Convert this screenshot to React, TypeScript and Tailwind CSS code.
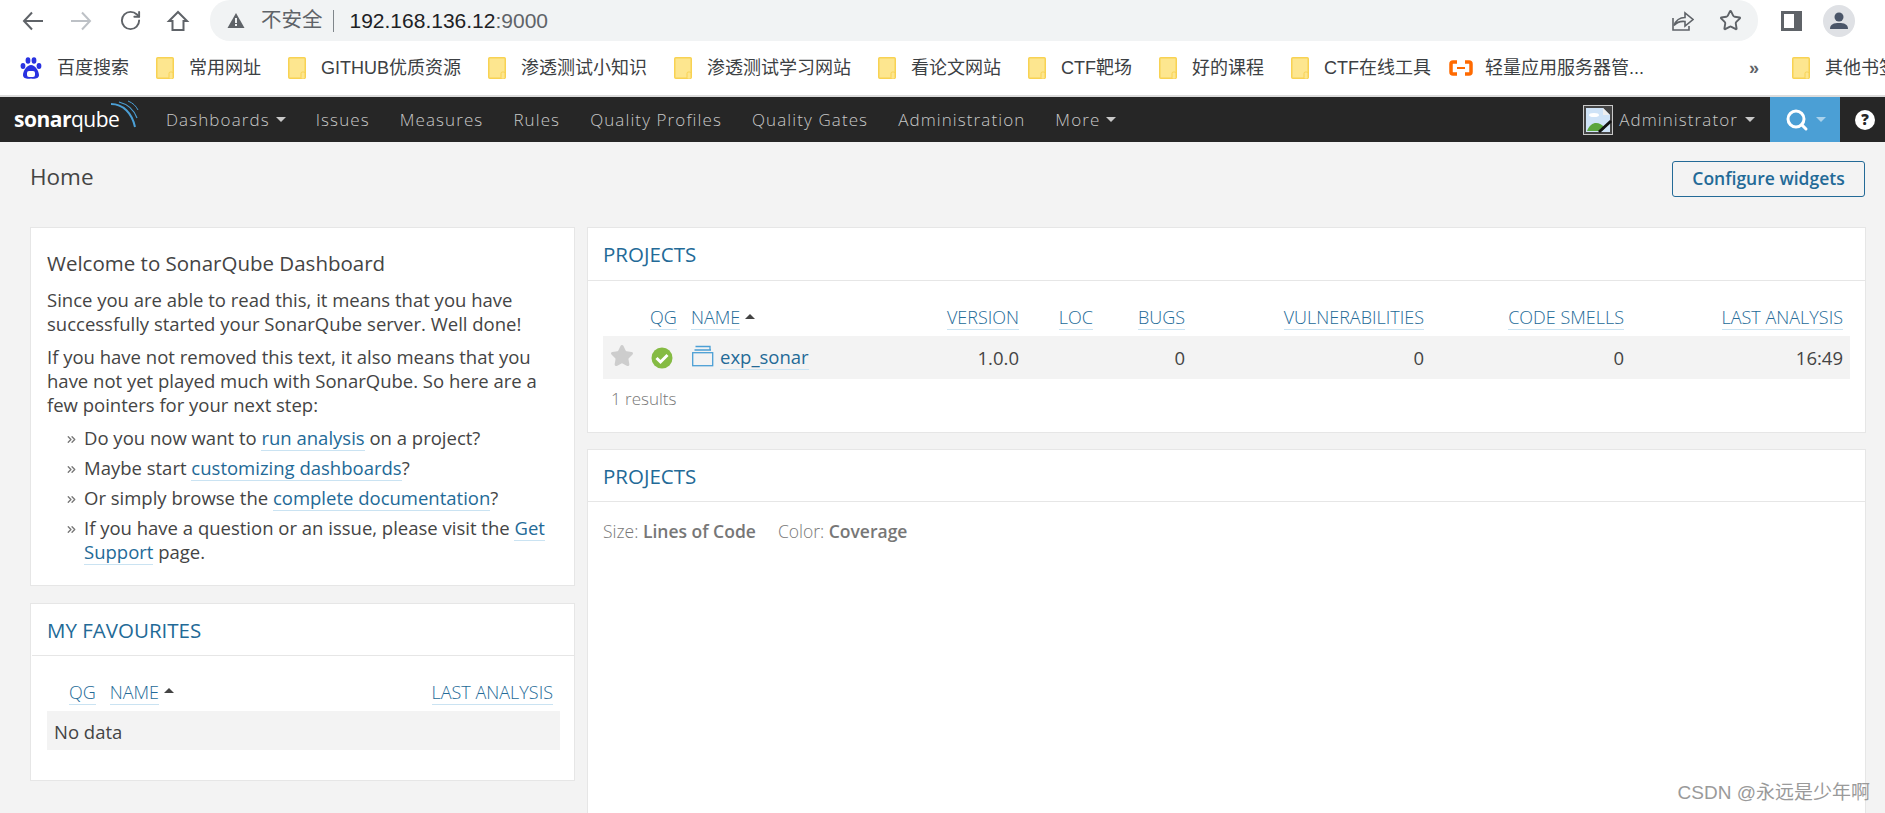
import React from "react";
import { RotateCw, Star, Search, ChevronsRight } from "lucide-react";

const bookmarks = [
  "常用网址",
  "GITHUB优质资源",
  "渗透测试小知识",
  "渗透测试学习网站",
  "看论文网站",
  "CTF靶场",
  "好的课程",
  "CTF在线工具",
];

const navItems = ["Issues", "Measures", "Rules", "Quality Profiles", "Quality Gates", "Administration"];

const Folder = () => (
  <svg width="18" height="22" viewBox="0 0 18 22" className="shrink-0">
    <rect x="0.75" y="0.75" width="16.5" height="20.5" rx="1" fill="#fde68f" stroke="#f8d253" strokeWidth="1.5" />
    <rect x="13" y="15" width="4" height="7" rx="1.5" fill="#fde68f" stroke="#f8d253" />
  </svg>
);

const Caret = ({ className = "border-t-[#c8c8c8]" }: { className?: string }) => (
  <span className={`inline-block w-0 h-0 border-x-[5px] border-x-transparent border-t-[5px] ${className}`} />
);

const SortUp = () => (
  <span className="inline-block w-0 h-0 ml-[5px] mb-[3px] border-x-[5px] border-x-transparent border-b-[5px] border-b-[#444]" />
);

const ColLink = ({ children }: { children: React.ReactNode }) => (
  <span className="border-b border-[#cae3f2] text-[#236a97] text-[18px] font-light leading-[24px] inline-block">
    {children}
  </span>
);

const Link = ({ children }: { children: React.ReactNode }) => (
  <span className="text-[#236a97] border-b border-[#cae3f2]">{children}</span>
);

const Pointer = ({ children }: { children: React.ReactNode }) => (
  <li className="flex">
    <ChevronsRight size={13} strokeWidth={2.5} className="text-[#777] shrink-0 mt-[7px] ml-[18px] mr-[6px]" />
    <div>{children}</div>
  </li>
);

export default function App() {
  return (
    <div className="relative w-[1885px] h-[813px] overflow-hidden bg-[#f3f3f3] text-[#444] font-['Open_Sans',sans-serif]">
      {/* Browser toolbar */}
      <div className="flex items-center h-[41px] bg-white text-[#5f6368]">
        <div className="flex items-center w-[210px] pl-[21px] gap-[24px]">
          <svg width="24" height="24" viewBox="0 0 24 24" fill="none" stroke="currentColor" strokeWidth="2">
            <path d="M22 12 H3 M11 3.5 L3 12 L11 20.5" />
          </svg>
          <svg width="24" height="24" viewBox="0 0 24 24" fill="none" stroke="#bdc1c6" strokeWidth="2">
            <path d="M2 12 H21 M13 3.5 L21 12 L13 20.5" />
          </svg>
          <RotateCw size={23} strokeWidth={2} className="ml-[2px]" />
          <svg width="24" height="24" viewBox="0 0 24 24" fill="none" stroke="currentColor" strokeWidth="2">
            <path d="M12 3 L3 12 H6.5 V21 H17.5 V12 H21 Z" />
          </svg>
        </div>
        <div className="flex items-center w-[1548px] h-[41px] pl-[17px] pr-[16px] rounded-[20px] bg-[#f1f3f4] font-['Liberation_Sans','Noto_Sans_CJK_SC',sans-serif]">
          <svg width="18" height="17" viewBox="0 0 18 17" className="shrink-0">
            <path d="M9 1 L17.5 16 H0.5 Z" fill="#5f6368" />
            <rect x="8" y="6" width="2" height="5" fill="#f1f3f4" />
            <rect x="8" y="12" width="2" height="2" fill="#f1f3f4" />
          </svg>
          <span className="ml-[16px] text-[20.5px] text-[#5f6368]">不安全</span>
          <span className="ml-[10px] w-px h-[22px] bg-[#80868b]" />
          <span className="ml-[16px] text-[21px] text-[#202124]">
            192.168.136.12<span className="text-[#5f6368]">:9000</span>
          </span>
          <div className="ml-auto flex items-center gap-[25px]">
            <svg width="24" height="24" viewBox="0 0 24 24" fill="none" stroke="currentColor" strokeWidth="1.6">
              <path d="M3 9 V21 H19 V17" />
              <path d="M4 16.5 C6 11 10 8.5 15 8.5 V4 L23 10.5 L15 17 V12.5 C11 12 7 13 4 16.5 Z" />
            </svg>
            <Star size={23} strokeWidth={2} />
          </div>
        </div>
        <div className="ml-[23px] w-[21px] h-[20px] border-[3px] border-r-[8px] border-[#5f6368] bg-white" />
        <div className="ml-[21px] flex items-center justify-center w-[32px] h-[32px] rounded-full bg-[#dfe1e5]">
          <svg width="20" height="20" viewBox="0 0 20 20">
            <circle cx="10" cy="6" r="4.5" fill="#4a5568" />
            <path d="M1 18 C1 13 5 12 10 12 C15 12 19 13 19 18 Z" fill="#4a5568" />
          </svg>
        </div>
      </div>

      {/* Bookmarks bar */}
      <div className="flex items-center h-[54px] bg-white pl-[20px] text-[18px] text-[#3c4043] whitespace-nowrap font-['Liberation_Sans','Noto_Sans_CJK_SC',sans-serif]">
        <svg width="22" height="23" viewBox="0 0 22 23" className="shrink-0 mr-[15px]">
          <g fill="#2932e1">
            <ellipse cx="3" cy="9" rx="2.4" ry="3" />
            <ellipse cx="8" cy="3.5" rx="2.4" ry="3.2" />
            <ellipse cx="14" cy="3.5" rx="2.4" ry="3.2" />
            <ellipse cx="19" cy="9" rx="2.4" ry="3" />
            <path d="M11 8 C7 8 3 14 3 18 C3 22 8 22 11 21.5 C14 22 19 22 19 18 C19 14 15 8 11 8 Z" />
          </g>
          <rect x="7" y="14" width="8" height="6" rx="2" fill="#fff" />
        </svg>
        <span className="mr-[27px]">百度搜索</span>
        {bookmarks.map((b) => (
          <div key={b} className="flex items-center gap-[15px] mr-[27px]">
            <Folder />
            <span>{b}</span>
          </div>
        ))}
        <svg width="24" height="16" viewBox="0 0 24 16" className="shrink-0 ml-[-9px] mr-[12px]">
          <path d="M8 2 H4 Q2 2 2 4 V12 Q2 14 4 14 H8 M16 2 H20 Q22 2 22 4 V12 Q22 14 20 14 H16" fill="none" stroke="#ff6a00" strokeWidth="3.5" />
          <rect x="8" y="7" width="8" height="2" fill="#ff6a00" />
        </svg>
        <span>轻量应用服务器管...</span>
        <span className="ml-[105px] text-[#5f6368] font-bold">»</span>
        <span className="ml-[16px] w-px h-[24px] bg-[#dadce0]" />
        <div className="flex items-center gap-[15px] ml-[17px]">
          <Folder />
          <span>其他书签</span>
        </div>
      </div>
      <div className="h-[2px] bg-[#dcdcdc]" />

      {/* Sonar nav */}
      <nav className="flex items-center h-[45px] bg-[#262626] text-[#c8c8c8] text-[17px] tracking-[1.1px] font-light whitespace-nowrap">
        <div className="relative w-[166px] pl-[14px] shrink-0 font-normal tracking-[-0.5px] text-white text-[21px] leading-none">
          <span className="font-bold">sonar</span>qube
          <svg width="32" height="30" viewBox="0 0 32 30" className="absolute left-[108px] top-[-9px]">
            <path d="M3 4 C15 4 24 13 27 27" fill="none" stroke="#4b9fd5" strokeWidth="2" />
            <path d="M11 2 C19 4 26 10 29 18" fill="none" stroke="#4b9fd5" strokeWidth="1.2" />
            <path d="M20 1 C25 3 28 6 30 10" fill="none" stroke="#4b9fd5" strokeWidth="1" />
          </svg>
        </div>
        <span className="flex items-center gap-[6px] mr-[30px]">
          Dashboards <Caret />
        </span>
        {navItems.map((n) => (
          <span key={n} className="mr-[30px]">
            {n}
          </span>
        ))}
        <span className="flex items-center gap-[6px]">
          More <Caret />
        </span>
        <div className="ml-auto flex items-center h-full">
          <svg width="30" height="30" viewBox="0 0 30 30" className="mr-[6px] shrink-0">
            <rect x="0.5" y="0.5" width="29" height="29" fill="#444" stroke="#c8c8c8" />
            <path d="M3 3 H20 L27 10 V27 H3 Z" fill="#cfe3f7" />
            <path d="M20 3 L27 10 H20 Z" fill="#eee" />
            <ellipse cx="11" cy="10" rx="5" ry="2" fill="#fff" />
            <path d="M4 26 C8 16 16 16 22 23 L19 26 Z" fill="#5aa53c" />
            <path d="M16 27 L28 16" stroke="#111" strokeWidth="3" />
          </svg>
          <span className="flex items-center gap-[7px] mr-[15px]">
            Administrator <Caret />
          </span>
          <div className="flex items-center justify-center gap-[7px] w-[70px] h-full bg-[#4b9fd5]">
            <Search size={24} strokeWidth={3} className="text-white" />
            <Caret className="border-t-[#a9d2ec]" />
          </div>
          <div className="w-[45px] pl-[15px]">
            <div className="flex items-center justify-center w-[20px] h-[20px] rounded-full bg-white text-[#262626] text-[15px] font-extrabold tracking-normal">
              ?
            </div>
          </div>
        </div>
      </nav>

      {/* Page */}
      <div className="pl-[30px] pr-[19px]">
        <div className="flex items-center justify-between h-[85px] pb-[12px]">
          <h1 className="text-[22.5px] font-normal mb-[3px]">Home</h1>
          <button className="w-[193px] h-[36px] mr-[1px] border border-[#236a97] rounded-[3px] text-[#236a97] text-[17.5px] font-semibold">
            Configure widgets
          </button>
        </div>

        <div className="flex gap-[12px] items-start text-[18.5px] leading-[24px]">
          {/* Left column */}
          <div className="w-[545px] shrink-0 flex flex-col gap-[17px]">
            <div className="h-[359px] bg-white border border-[#e6e6e6] pl-[16px] pr-[14px] pt-[23px]">
              <h3 className="text-[20.5px] font-normal leading-[24px] mb-[13px]">Welcome to SonarQube Dashboard</h3>
              <p className="mb-[9px]">
                Since you are able to read this, it means that you have successfully started your SonarQube server. Well
                done!
              </p>
              <p className="mb-[9px]">
                If you have not removed this text, it also means that you have not yet played much with SonarQube. So
                here are a few pointers for your next step:
              </p>
              <ul className="flex flex-col gap-[6px]">
                <Pointer>
                  Do you now want to <Link>run analysis</Link> on a project?
                </Pointer>
                <Pointer>
                  Maybe start <Link>customizing dashboards</Link>?
                </Pointer>
                <Pointer>
                  Or simply browse the <Link>complete documentation</Link>?
                </Pointer>
                <Pointer>
                  <span>
                    If you have a question or an issue, please visit the <Link>Get Support</Link> page.
                  </span>
                </Pointer>
              </ul>
            </div>

            <div className="h-[178px] bg-white border border-[#e6e6e6]">
              <div className="h-[52px] ml-[1px] flex items-center px-[15px] border-b border-[#e6e6e6] text-[20.5px] text-[#236a97]">
                MY FAVOURITES
              </div>
              <div className="pl-[16px] pr-[14px] pt-[20px]">
                <div className="flex items-center h-[32px] pl-[22px] pr-[7px] gap-[14px]">
                  <ColLink>QG</ColLink>
                  <div className="flex items-center">
                    <ColLink>NAME</ColLink>
                    <SortUp />
                  </div>
                  <div className="ml-auto">
                    <ColLink>LAST ANALYSIS</ColLink>
                  </div>
                </div>
                <div className="h-[39px] mt-[3px] flex items-center pl-[7px] pt-[2px] bg-[#f3f3f3]">No data</div>
              </div>
            </div>
          </div>

          {/* Right column */}
          <div className="flex-1 flex flex-col gap-[16px]">
            <div className="h-[206px] bg-white border border-[#e6e6e6]">
              <div className="h-[53px] flex items-center px-[15px] border-b border-[#e6e6e6] text-[20.5px] text-[#236a97]">
                PROJECTS
              </div>
              <div className="px-[15px] pt-[17px]">
                <div className="grid grid-cols-[47px_41px_240px_88px_74px_92px_239px_200px_219px] h-[32px] pr-[7px] items-end">
                  <span />
                  <div>
                    <ColLink>QG</ColLink>
                  </div>
                  <div className="flex items-center">
                    <ColLink>NAME</ColLink>
                    <SortUp />
                  </div>
                  {["VERSION", "LOC", "BUGS", "VULNERABILITIES", "CODE SMELLS", "LAST ANALYSIS"].map((h) => (
                    <div key={h} className="text-right">
                      <ColLink>{h}</ColLink>
                    </div>
                  ))}
                </div>
                <div className="grid grid-cols-[47px_41px_240px_88px_74px_92px_239px_200px_219px] items-center h-[43px] mt-[6px] pr-[7px] bg-[#f3f3f3]">
                  <Star size={24} className="ml-[7px] mb-[4px] fill-[#cdcdcd] text-[#cdcdcd]" />
                  <svg width="22" height="22" viewBox="0 0 22 22" className="mt-[1px] ml-[1px]">
                    <circle cx="11" cy="11" r="10.5" fill="#85bb43" />
                    <path d="M5.5 11 L9.5 15 L16.5 8" fill="none" stroke="#fff" strokeWidth="3" />
                  </svg>
                  <div className="flex items-center gap-[6px]">
                    <svg width="22" height="22" viewBox="0 0 22 22" className="mb-[4px] ml-[1px] shrink-0">
                      <g fill="none" stroke="#4b9fd5" strokeWidth="1.3">
                        <rect x="0.7" y="7.7" width="20" height="13" />
                        <path d="M2.5 5 H19 M3.5 1.5 H18 V5" />
                      </g>
                    </svg>
                    <Link>exp_sonar</Link>
                  </div>
                  {["1.0.0", "", "0", "0", "0", "16:49"].map((v, i) => (
                    <div key={i} className="text-right">
                      {v}
                    </div>
                  ))}
                </div>
                <div className="mt-[8px] ml-[8px] text-[17px] font-light text-[#777]">1 results</div>
              </div>
            </div>

            <div className="h-[400px] bg-white border border-[#e6e6e6]">
              <div className="h-[52px] flex items-center px-[15px] border-b border-[#e6e6e6] text-[20.5px] text-[#236a97]">
                PROJECTS
              </div>
              <div className="px-[15px] pt-[17px] text-[17.5px] text-[#777]">
                <span className="font-light">Size:</span> <span className="font-semibold">Lines of Code</span>
                <span className="ml-[22px] font-light">Color:</span> <span className="font-semibold">Coverage</span>
              </div>
            </div>
          </div>
        </div>
      </div>

      {/* Watermark */}
      <div className="absolute right-[15px] bottom-[6px] text-[19px] text-[#9a9a9a] font-['Liberation_Sans','Noto_Sans_CJK_SC',sans-serif]">
        CSDN @永远是少年啊
      </div>
    </div>
  );
}
